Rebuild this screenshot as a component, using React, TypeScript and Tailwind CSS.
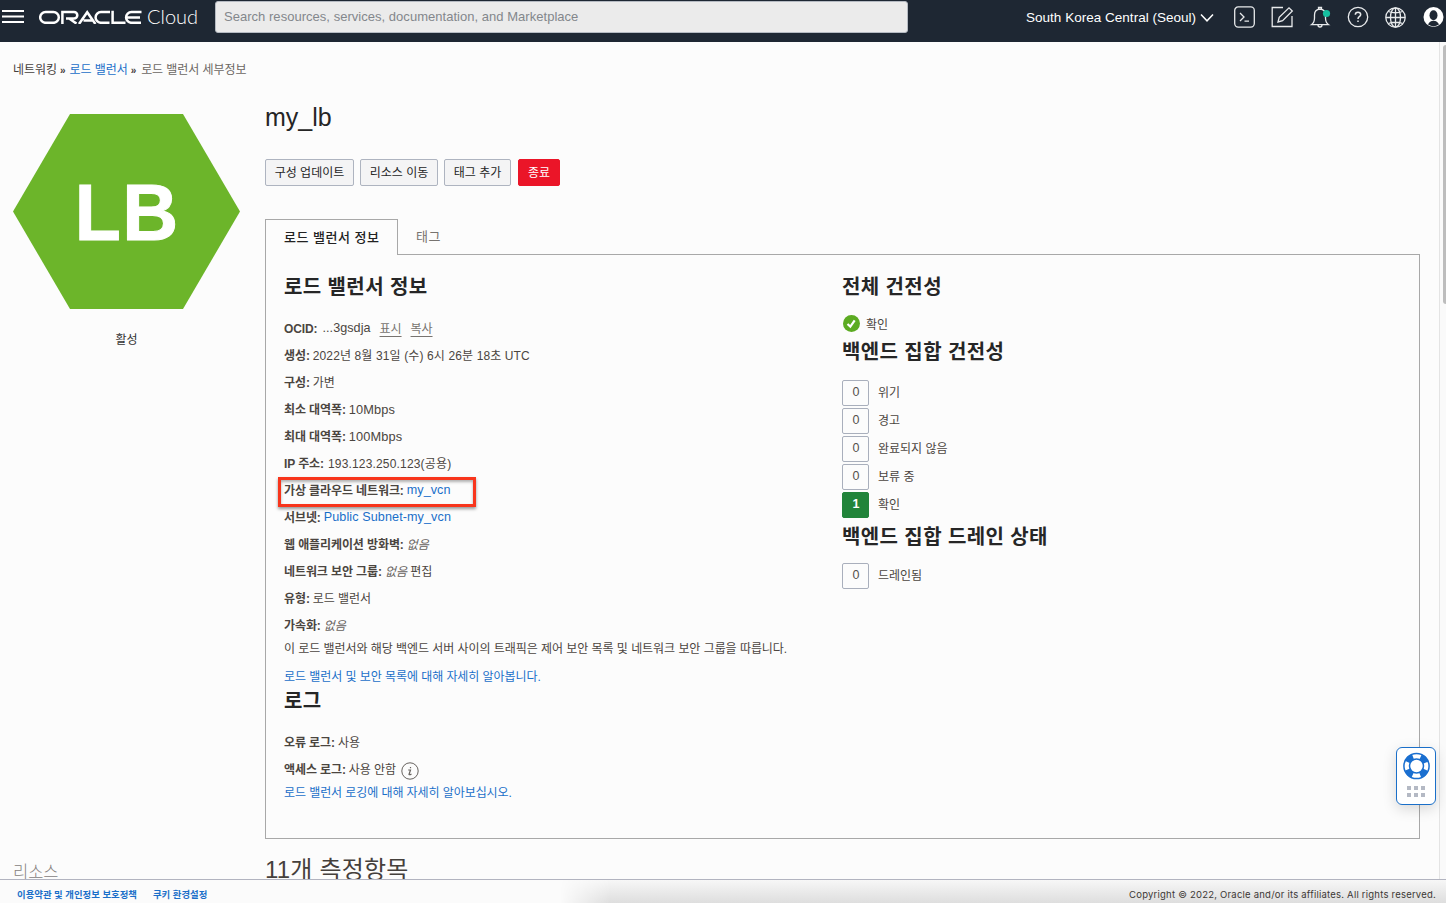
import { ReactNode } from "react";

const ui = "font-['Liberation_Sans','Noto_Sans_CJK_KR',sans-serif]";

function Row({ label, children }: { label: string; children: ReactNode }) {
  return (
    <div className="flex h-[27px] items-center whitespace-pre text-[12px] tracking-[-0.05px] text-[#4b4540]">
      <b className="mr-[3px] tracking-[-0.1px]">{label}</b>
      {children}
    </div>
  );
}

function Title({ children, className = "" }: { children: ReactNode; className?: string }) {
  return (
    <h2 className={"h-[30px] whitespace-nowrap text-[20px] font-bold leading-[34px] tracking-[0.4px] text-[#262626] " + className}>
      {children}
    </h2>
  );
}

function Count({ value, label, active }: { value: string; label: string; active?: boolean }) {
  return (
    <div className="flex h-[28px] items-start text-[12px] text-[#4b4540]">
      <span
        className={
          "flex h-[26px] w-[27px] items-center justify-center rounded-[2px] border pb-[2px] pl-px text-[12.5px] " +
          (active ? "border-[#21843a] bg-[#21843a] font-bold text-white" : "border-[#a9afbc] text-[#55504c]")
        }
      >
        {value}
      </span>
      <span className="ml-[9px] leading-[27px]">{label}</span>
    </div>
  );
}

function Header() {
  return (
    <header className="flex h-[42px] w-full shrink-0 items-start bg-[#1e2733] text-white">
      <svg className="ml-[2px] mt-[9px] shrink-0" width="22" height="15" stroke="white" strokeWidth="2">
        <path d="M0 2H22M0 7.5H22M0 13H22" />
      </svg>
      <svg className="ml-[15px] mt-[10px] shrink-0" width="104" height="14" viewBox="0 0 104 14" fill="none" stroke="white" strokeWidth="2.5">
        <rect x="1.2" y="2" width="18.6" height="10.8" rx="5.4" />
        <path d="M23.4 14V2H35a3.3 3.3 0 0 1 0 6.6H27M30.5 8.8L37.5 13.6" />
        <path d="M40 14L48.2 2.2L56.4 14M44.5 10.6H53.5" />
        <path d="M71 2H62a5.4 5.4 0 0 0 0 10.8H70.5" />
        <path d="M73.6 0.8V12.8H86.5" />
        <path d="M102.5 2H92.5a5.4 5.4 0 0 0 0 10.8H102M88 7.4H101" />
      </svg>
      <span className="ml-[4px] mt-[4px] w-[52px] whitespace-nowrap font-['Lato',sans-serif] text-[20px] font-light leading-[25px]">
        Cloud
      </span>
      <div className="ml-[16px] mt-[1px] flex h-[32px] w-[693px] items-center rounded-[3px] border border-[#b5bac2] bg-[#ebebeb] pl-[8px] text-[13px] tracking-[0.03px] text-[#83878c]">
        Search resources, services, documentation, and Marketplace
      </div>
      <div className="ml-[118px] mt-[8px] flex h-[20px] items-center whitespace-nowrap text-[13.5px] tracking-[0.02px]">
        South Korea Central (Seoul)
      </div>
      <svg className="ml-auto mt-[13px] shrink-0" width="14" height="10" fill="none" stroke="white" strokeWidth="1.5">
        <path d="M1 1.5L7 7.8L13 1.5" />
      </svg>
      <svg className="ml-[20px] mt-[6px] shrink-0" width="212" height="24" viewBox="0 0 212 24" fill="none" stroke="#e8eaec" strokeWidth="1.3">
        <rect x="0.7" y="0.9" width="19.6" height="20.2" rx="3.5" />
        <path d="M6 7L10 11L6 15M10.5 15.2H15" />
        <path d="M49 1.5H38.2V20.5H58V10" />
        <path d="M44 16L45.2 11.4L55 1.8L58.3 5L48.6 14.7Z" />
        <path d="M77.5 18.7Q80.5 16.5 80.5 12V9Q80.5 3.4 86 3.2Q91.5 3.4 91.5 9V12Q91.5 16.5 94.5 18.7ZM84.5 3V1.5H87.5V3M84 19Q84 21 86 21T88 19" />
        <circle cx="92.5" cy="7.5" r="3.6" fill="#16bfa0" stroke="none" />
        <circle cx="124" cy="11" r="9.7" />
        <path d="M121.3 8.7Q121.4 6.3 124 6.3T126.7 8.6Q126.7 9.8 125.3 10.7Q124 11.5 124 13M124 14.4V16" strokeWidth="1.5" />
        <circle cx="161.5" cy="11.5" r="9.7" />
        <ellipse cx="161.5" cy="11.5" rx="5" ry="9.7" />
        <path d="M152 11.5H171M154.3 5.5Q161.5 8 168.7 5.5M154.3 17.5Q161.5 15 168.7 17.5M161.5 2V21" />
        <circle cx="199.5" cy="11" r="10" fill="white" stroke="none" />
        <ellipse cx="199.5" cy="9.2" rx="4" ry="5" fill="#1e2733" stroke="none" />
        <path d="M194 18.6Q195.5 14.8 199.5 14.8T205 18.6Q202 20.4 199.5 20.4T194 18.6Z" fill="#1e2733" stroke="none" />
      </svg>
    </header>
  );
}

export default function App() {
  const link = "text-[#1a6fc9]";
  return (
    <div className={"relative flex h-[903px] w-[1446px] flex-col overflow-hidden bg-[#fcfcfc] " + ui}>
      <Header />
      <div className="flex min-h-0 flex-1 overflow-hidden">
        <main className="flex w-[1439px] shrink-0 flex-col">
          <nav className="flex h-[54px] shrink-0 items-center pl-[13px] pt-[2px] text-[12px] tracking-[-0.06px] text-[#45403c]">
            네트워킹<b className="ml-[3px] mr-[4px] text-[10px]">»</b>
            <span className={link}>로드 밸런서</span>
            <b className="ml-[3px] mr-[5px] text-[10px]">»</b>
            <span className="text-[#6b6763]">로드 밸런서 세부정보</span>
          </nav>
          <div className="flex">
            <aside className="flex w-[265px] shrink-0 flex-col pl-[13px] pt-[18px]">
              <svg width="227" height="195" viewBox="0 0 227 195">
                <path d="M57 0H170L227 97.5L170 195H57L0 97.5Z" fill="#6cb52a" />
                <g fill="white" stroke="white" strokeWidth="1" fontSize="80" fontWeight="700" fontFamily="Liberation Sans">
                  <text x="61.8" y="125.7" textLength="46" lengthAdjust="spacingAndGlyphs">L</text>
                  <text x="109.3" y="125.7" textLength="56" lengthAdjust="spacingAndGlyphs">B</text>
                </g>
              </svg>
              <div className="mt-[21px] w-[227px] text-center text-[12px] leading-[20px] text-[#333]">활성</div>
              <div className="mt-[512px] text-[16.5px] font-light leading-[20px] text-[#85817d]">리소스</div>
            </aside>
            <section className="w-[1155px]">
              <h1 className="mt-[3px] h-[36px] text-[25px] leading-[36px] text-[#252525]">my_lb</h1>
              <div className="mt-[24px] flex h-[27px] text-[12px] leading-[27px] text-[#252525]">
                <button className="flex w-[89px] justify-center rounded-[2px] border border-[#aeb4c0] bg-[#f4f4f5]">구성 업데이트</button>
                <button className="ml-[6px] flex w-[78px] justify-center rounded-[2px] border border-[#aeb4c0] bg-[#f4f4f5]">리소스 이동</button>
                <button className="ml-[6px] flex w-[67px] justify-center rounded-[2px] border border-[#aeb4c0] bg-[#f4f4f5]">태그 추가</button>
                <button className="ml-[7px] flex w-[42px] justify-center rounded-[2px] border border-[#eb1528] bg-[#eb1528] text-white">종료</button>
              </div>
              <div className="mt-[33px] flex h-[36px] text-[13px] tracking-[0.5px]">
                <div className="w-[133px] border-x border-t border-[#a8a8a8] pl-[18px] font-medium leading-[36px] text-[#222]">로드 밸런서 정보</div>
                <div className="flex-1 border-b border-[#a8a8a8] pl-[18px] leading-[36px] text-[#77736f]">태그</div>
              </div>
              <div className="flex h-[584px] border-x border-b border-[#a8a8a8] pl-[18px]">
                <div className="flex w-[558px] flex-col pt-[15px]">
                  <Title>로드 밸런서 정보</Title>
                  <div className="mt-[15px]">
                    <Row label="OCID:">
                      <span className="ml-[2px] text-[12.6px] tracking-[0.05px]">...3gsdja</span>
                      <span className="ml-[9px] text-[#77736f] underline underline-offset-[3px]">표시</span>
                      <span className="ml-[9px] text-[#77736f] underline underline-offset-[3px]">복사</span>
                    </Row>
                    <Row label="생성:"><span className="tracking-[0.12px]">2022년 8월 31일 (수) 6시 26분 18초 UTC</span></Row>
                    <Row label="구성:">가변</Row>
                    <Row label="최소 대역폭:"><span className="text-[12.8px] tracking-[0.1px]">10Mbps</span></Row>
                    <Row label="최대 대역폭:"><span className="text-[12.8px] tracking-[0.1px]">100Mbps</span></Row>
                    <Row label="IP 주소:"><span className="ml-px tracking-[0.17px]">193.123.250.123(공용)</span></Row>
                    <div className="relative">
                      <Row label="가상 클라우드 네트워크:"><span className={"text-[12.6px] tracking-[0.05px] " + link}>my_vcn</span></Row>
                      <div className="absolute -left-[6px] top-0 h-[30px] w-[198px] border-[3px] border-[#f8351c] shadow-[0_2px_3px_rgba(0,0,0,0.4),inset_0_2px_3px_rgba(0,0,0,0.3)]" />
                    </div>
                    <Row label="서브넷:"><span className={"text-[12.6px] tracking-[0.1px] " + link}>Public Subnet-my_vcn</span></Row>
                    <Row label="웹 애플리케이션 방화벽:"><i className="text-[#66625e]">없음</i></Row>
                    <Row label="네트워크 보안 그룹:"><i className="text-[#66625e]">없음</i> 편집</Row>
                    <Row label="유형:">로드 밸런서</Row>
                    <Row label="가속화:"><i className="text-[#66625e]">없음</i></Row>
                  </div>
                  <p className="whitespace-nowrap text-[12px] leading-[20px] tracking-[-0.05px] text-[#4b4540]">
                    이 로드 밸런서와 해당 백엔드 서버 사이의 트래픽은 제어 보안 목록 및 네트워크 보안 그룹을 따릅니다.
                  </p>
                  <p className={"mt-[8px] text-[12px] leading-[20px] tracking-[-0.06px] " + link}>로드 밸런서 및 보안 목록에 대해 자세히 알아봅니다.</p>
                  <Title className="-mt-[3px]">로그</Title>
                  <div className="mt-[15px]">
                    <Row label="오류 로그:">사용</Row>
                    <Row label="액세스 로그:">
                      사용 안함
                      <svg className="ml-[5px] mt-[2px]" width="18" height="18" fill="none" stroke="#66625e">
                        <circle cx="9" cy="9" r="8.2" />
                        <path d="M7.2 8H9.5L8 12.5Q8.5 13.2 10.5 12M9.5 5V6.3" strokeWidth="1.2" />
                      </svg>
                    </Row>
                  </div>
                  <p className={"text-[12px] leading-[20px] tracking-[-0.08px] " + link}>로드 밸런서 로깅에 대해 자세히 알아보십시오.</p>
                </div>
                <div className="pt-[15px]">
                  <Title>전체 건전성</Title>
                  <div className="mt-[14px] flex h-[20px] items-center text-[12px] text-[#4b4540]">
                    <svg width="18" height="18">
                      <circle cx="9.5" cy="8.6" r="8.5" fill="#5cab22" />
                      <path d="M5.5 9L8.3 11.6L12.7 5.3" fill="none" stroke="white" strokeWidth="2.2" />
                    </svg>
                    <span className="ml-[6px] mt-px">확인</span>
                  </div>
                  <Title className="mt-px">백엔드 집합 건전성</Title>
                  <div className="mt-[15px]">
                    <Count value="0" label="위기" />
                    <Count value="0" label="경고" />
                    <Count value="0" label="완료되지 않음" />
                    <Count value="0" label="보류 중" />
                    <Count value="1" label="확인" active />
                  </div>
                  <Title>백엔드 집합 드레인 상태</Title>
                  <div className="mt-[13px]">
                    <Count value="0" label="드레인됨" />
                  </div>
                </div>
              </div>
              <h2 className="mt-[13px] whitespace-nowrap text-[24px] leading-[36px] tracking-[0.2px] text-[#45403c]">11개 측정항목</h2>
            </section>
          </div>
        </main>
        <div className="flex w-[7px] shrink-0 justify-end border-l border-[#e4e4e4] bg-[#fafafa]">
          <div className="mt-[3px] h-[259px] w-[3px] rounded-l-full bg-[#bdbdbd]" />
        </div>
      </div>
      <footer className="relative flex h-[24px] shrink-0 items-center border-t border-[#b2b4c0] bg-[#fbfbfb] pl-[17px] pr-[10px] pt-[7px] text-[9.4px]">
        <div className="absolute inset-y-0 left-[560px] right-0 bg-linear-to-b from-[#f7f7f7] to-[#dedede] [mask-image:linear-gradient(to_right,transparent,black_50px)]" />
        <b className={"relative " + link}>이용약관 및 개인정보 보호정책</b>
        <b className={"relative ml-[16px] " + link}>쿠키 환경설정</b>
        <span className="relative ml-auto font-['Inter',sans-serif] text-[9.5px] tracking-[0.22px] text-[#3c3835]">
          Copyright © 2022, Oracle and/or its affiliates. All rights reserved.
        </span>
      </footer>
      <div className="absolute left-[1396px] top-[747px] flex h-[58px] w-[40px] flex-col items-center rounded-[6px] border border-[#1a6fc9] bg-white pt-[4px] shadow-[0_4px_14px_rgba(0,0,0,0.15)]">
        <svg width="28" height="28" viewBox="0 0 28 28" fill="none" stroke="#1a6fd0">
          <circle cx="14.5" cy="14" r="12.6" strokeWidth="1.5" />
          <circle cx="14.5" cy="14" r="7" strokeWidth="1.5" />
          <circle cx="14.5" cy="14" r="9.8" strokeWidth="6" strokeDasharray="7.7 7.7" strokeDashoffset="-3.85" />
        </svg>
        <svg className="mt-[6px]" width="18" height="12" fill="#b4b9c4">
          <path d="M0 0h4v4H0zM7 0h4v4H7zM14 0h4v4h-4zM0 7h4v4H0zM7 7h4v4H7zM14 7h4v4h-4z" />
        </svg>
      </div>
    </div>
  );
}
